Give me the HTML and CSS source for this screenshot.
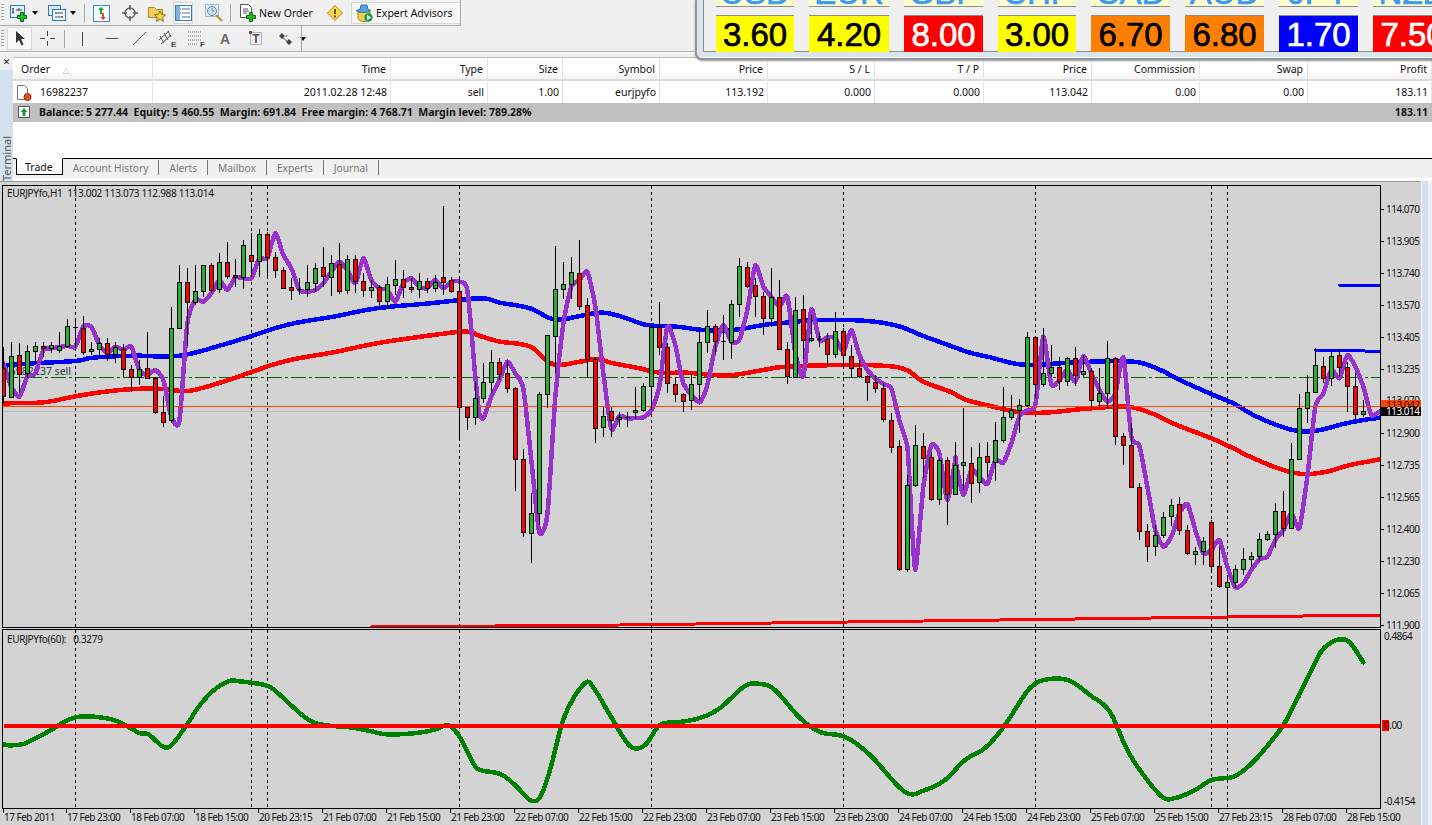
FILE: index.html
```html
<!DOCTYPE html>
<html lang="en">
<head>
<meta charset="utf-8">
<title>MetaTrader - EURJPYfo,H1</title>
<link rel="stylesheet" href="styles.css">
</head>
<body>
<header class="toolbars">
  <div class="bar bar-one">
    <span class="grip"></span>
    <svg class="ml6" width="18" height="17" viewBox="0 0 18 17"><rect x=".5" y=".5" width="14" height="12" fill="#e6f1fb" stroke="#2f78c4"/><path d="M3 3v6M2 4h2M2 7h2M6 5h6M9 3v3" stroke="#444" fill="none"/><path d="M7.500 10.500h3v-3h3v3h3v3h-3v3h-3v-3h-3z" fill="#22c022" stroke="#0b6b0b"/></svg>
    <svg class="ml4 caret" width="6" height="4" viewBox="0 0 6 4"><path d="M0 0h6L3 4z"/></svg>
    <svg class="ml10" width="18" height="16" viewBox="0 0 18 16"><rect x=".5" y=".5" width="12" height="10" fill="#dcebf8" stroke="#2f78c4"/><rect x="4.500" y="4.500" width="13" height="11" fill="#eef5fb" stroke="#2f78c4"/><path d="M7 8h8M7 12h8M8 7v2M14 11v2" stroke="#555" fill="none"/></svg>
    <svg class="ml4 caret" width="6" height="4" viewBox="0 0 6 4"><path d="M0 0h6L3 4z"/></svg>
    <span class="sep ml8"></span>
    <svg class="ml8" width="17" height="17" viewBox="0 0 17 17"><rect x=".5" y=".5" width="16" height="16" fill="#f6fafd" stroke="#3a8ad6"/><path d="M8 2l3 3H9v4H7V5H5z" fill="#1ca31c"/><path d="M10 15l-3-3h2V8h2v4h2z" fill="#e2452a"/></svg>
    <svg class="ml12" width="16" height="16" viewBox="0 0 16 16"><circle cx="8" cy="8" r="5" fill="none" stroke="#666" stroke-width="1.500"/><path d="M8 0v5M8 11v5M0 8h5M11 8h5" stroke="#555" stroke-width="1.500"/></svg>
    <svg class="ml10" width="18" height="17" viewBox="0 0 18 17"><path d="M.5 2.500h6l2 2h6v8H.5z" fill="#f4cf55" stroke="#a88a2a"/><path d="M12 6l1.700 3.400 3.800.5-2.800 2.600.7 3.700-3.400-1.800-3.400 1.800.7-3.700-2.800-2.600 3.800-.5z" fill="#f5d23e" stroke="#8a7420"/></svg>
    <span class="pressed sel-nav ml7"><svg width="17" height="16" viewBox="0 0 17 16"><rect x=".5" y=".5" width="16" height="15" fill="#fff" stroke="#2b7cc9"/><rect x="1" y="1" width="4" height="14" fill="#7fb6e8"/><path d="M7 4h8M7 8h8M7 12h8" stroke="#3a6ea5"/><path d="M5 4h1M5 8h1" stroke="#d33"/></svg></span>
    <svg class="ml12" width="18" height="18" viewBox="0 0 18 18"><rect x=".5" y=".5" width="13" height="12" fill="#e4edf5" stroke="#9fb7cc"/><circle cx="7" cy="7" r="4.500" fill="#cfe2f3" stroke="#5c86ab"/><path d="M7 4v3h2" stroke="#5c86ab" fill="none"/><path d="M11 11l6 6" stroke="#c98b2a" stroke-width="2"/></svg>
    <span class="sep ml7"></span>
    <svg class="ml9" width="17" height="18" viewBox="0 0 17 18"><path d="M.5.500h8l3 3v10H.5z" fill="#fff" stroke="#555"/><path d="M3 5h5M3 7h6M3 9h4" stroke="#555" fill="none"/><path d="M6.500 11.500h3v-3h3v3h3v3h-3v3h-3v-3h-3z" fill="#22c022" stroke="#0b6b0b"/></svg>
    <span class="btn-text new-order">New Order</span>
    <svg class="ml10" width="16" height="16" viewBox="0 0 16 16"><path d="M8 .500L15.500 8 8 15.500.500 8z" fill="#fbd84a" stroke="#b98a1e"/><path d="M8 4v5" stroke="#7a4f00" stroke-width="2"/><path d="M8 10.500v2" stroke="#7a4f00" stroke-width="2"/></svg>
    <span class="pressed ea ml8">
      <svg width="17" height="18" viewBox="0 0 17 18"><path d="M2 8h12v6.500a6 3 0 0 1-12 0z" fill="#f2cf4a" stroke="#a5831f"/><path d="M0 6.500c3 2.500 12 2.500 15 0l-3-1-1-4.500H5L4 5.500z" fill="#5aa6dc" stroke="#2e6fa5"/><circle cx="12.500" cy="13.500" r="4.200" fill="#15a34a"/><path d="M11 11l4 2.500-4 2.500z" fill="#fff"/></svg>
      <span class="btn-text">Expert Advisors</span>
    </span>
    <span class="bar-end bar-end-one"></span>
  </div>
  <div class="bar bar-two">
    <span class="grip"></span>
    <span class="pressed sel-cursor ml3"><svg width="10" height="15" viewBox="0 0 10 15"><path d="M1 0v12l3-3 2.500 5.500 2-1L6 8h4z" fill="#333"/></svg></span>
    <svg class="ml8" width="15" height="15" viewBox="0 0 15 15"><path d="M7.500 0v5M7.500 10v5M0 7.500h5M10 7.500h5" stroke="#444" fill="none"/></svg>
    <span class="sep ml9"></span>
    <svg class="ml16" width="3" height="14" viewBox="0 0 3 14"><path d="M1.500 0v14" stroke="#444"/></svg>
    <svg class="ml22" width="12" height="3" viewBox="0 0 12 3"><path d="M0 1.500h12" stroke="#444"/></svg>
    <svg class="ml15" width="13" height="13" viewBox="0 0 13 13"><path d="M0 13L13 0" stroke="#666"/></svg>
    <svg class="ml13" width="18" height="18" viewBox="0 0 18 18"><path d="M0 10L10 1M2 14L12 5M1 6l4 7M5 3l4 7M9 1l3 6" stroke="#555" fill="none"/><text x="12" y="17" class="tool-mark">E</text></svg>
    <svg class="ml11" width="18" height="18" viewBox="0 0 18 18"><path d="M0 2h14M0 6h14M0 10h14M0 14h10" stroke="#666" stroke-dasharray="1 1" fill="none"/><text x="12" y="17" class="tool-mark">F</text></svg>
    <span class="glyph-a ml14">A</span>
    <svg class="ml17" width="14" height="15" viewBox="0 0 14 15"><rect x="1.500" y="1.500" width="11" height="12" fill="none" stroke="#777" stroke-dasharray="1 1"/><rect x="0" y="0" width="3" height="3" fill="#555"/><text x="7" y="12" class="tool-t">T</text></svg>
    <svg class="ml16" width="14" height="12" viewBox="0 0 14 12"><path d="M0 3l3-3 3 3-3 3zM7 9l3-3 3 3-3 3z" fill="#444"/><path d="M4 5l4 3M8 2l-1 2" stroke="#666"/></svg>
    <svg class="ml7 caret" width="6" height="4" viewBox="0 0 6 4"><path d="M0 0h6L3 4z"/></svg>
    <span class="bar-end bar-end-two"></span>
  </div>
</header>

<aside class="rates">
  <div class="rates-inner">
    <div class="rate-row names">
      <div class="rate name"><span>USD</span></div><div class="rate name"><span>EUR</span></div><div class="rate name"><span>GBP</span></div><div class="rate name"><span>CHF</span></div><div class="rate name"><span>CAD</span></div><div class="rate name"><span>AUD</span></div><div class="rate name"><span>JPY</span></div><div class="rate name"><span>NZD</span></div>
    </div>
    <div class="rate-row values">
      <div class="rate yellow">3.60</div><div class="rate yellow">4.20</div><div class="rate red">8.00</div><div class="rate yellow">3.00</div><div class="rate orange">6.70</div><div class="rate orange">6.80</div><div class="rate blue">1.70</div><div class="rate red">7.50</div>
    </div>
  </div>
</aside>

<section class="terminal">
  <div class="side">
    <span class="close">&#x2715;</span>
    <div class="side-tab"><span class="side-label">Terminal</span></div>
  </div>
  <div class="term-main">
    <div class="cols head">
      <div class="cell left">Order <i class="sort">&#x25B3;</i></div><div class="cell">Time</div><div class="cell">Type</div><div class="cell">Size</div><div class="cell">Symbol</div><div class="cell">Price</div><div class="cell">S / L</div><div class="cell">T / P</div><div class="cell">Price</div><div class="cell">Commission</div><div class="cell">Swap</div><div class="cell">Profit</div>
    </div>
    <div class="cols row">
      <div class="cell left order-cell">
        <svg width="15" height="16" viewBox="0 0 15 16"><path d="M.500.500h7l3 3v11H.500z" fill="#fff" stroke="#777"/><circle cx="10.500" cy="12" r="3.500" fill="#e2501f" stroke="#a32a0a"/></svg>
        <span>16982237</span>
      </div>
      <div class="cell">2011.02.28 12:48</div><div class="cell">sell</div><div class="cell">1.00</div><div class="cell">eurjpyfo</div><div class="cell">113.192</div><div class="cell">0.000</div><div class="cell">0.000</div><div class="cell">113.042</div><div class="cell">0.00</div><div class="cell">0.00</div><div class="cell">183.11</div>
    </div>
    <div class="balance">
      <svg width="12" height="12" viewBox="0 0 12 12"><rect x=".5" y=".5" width="11" height="11" fill="#fff" stroke="#555"/><path d="M6 2l3.500 4H7.500v4h-3V6H2.500z" fill="#159a2b"/></svg>
      <span class="balance-text">Balance: 5 277.44&nbsp; Equity: 5 460.55&nbsp; Margin: 691.84&nbsp; Free margin: 4 768.71&nbsp; Margin level: 789.28%</span>
      <span class="balance-profit">183.11</span>
    </div>
    <div class="blank"></div>
    <nav class="tabs">
      <span class="tab active">Trade</span>
      <span class="tab">Account History</span>
      <span class="tab">Alerts</span>
      <span class="tab">Mailbox</span>
      <span class="tab">Experts</span>
      <span class="tab">Journal</span>
    </nav>
  </div>
</section>

<main class="workspace">
  <svg id="chart" class="chart" width="1421" height="644" viewBox="0 181 1421 644"></svg>
  <div class="dock"></div>
</main>
<script src="chart.js"></script>
</body>
</html>
```
FILE: styles.css
```css
* { box-sizing: border-box; }
html, body { margin: 0; padding: 0; height: 825px; overflow: hidden; background: #f0f0f0; }
body { position: relative; width: 1432px; font: 10.5px "Noto Sans", "DejaVu Sans", sans-serif; color: #111; }
svg { display: block; flex: none; }

.toolbars { height: 57px; background: #f0f0f0; }
.bar { display: flex; align-items: center; position: relative; }
.bar-one { height: 26px; }
.bar-two { height: 26px; border-bottom: 1px solid #a8a8a8; box-shadow: 0 1px 0 #fff; }
.bar-end { position: absolute; left: 0; bottom: 0; border-right: 1px solid #a8a8a8; }
.bar-end-one { width: 461px; height: 26px; border-bottom: 1px solid #a8a8a8; }
.bar-end-two { width: 302px; height: 25px; }
.grip { width: 3px; height: 18px; margin-left: 1px; background: repeating-linear-gradient(#a0a0a0 0 1px, transparent 1px 3px); }
.sep { width: 1px; height: 18px; background: #a8a8a8; flex: none; }
.caret { fill: #111; }
.ml3 { margin-left: 3px; } .ml4 { margin-left: 4px; } .ml6 { margin-left: 6px; } .ml7 { margin-left: 7px; }
.ml8 { margin-left: 8px; } .ml9 { margin-left: 9px; } .ml10 { margin-left: 10px; } .ml11 { margin-left: 11px; }
.ml12 { margin-left: 12px; } .ml13 { margin-left: 13px; } .ml14 { margin-left: 14px; } .ml15 { margin-left: 15px; }
.ml16 { margin-left: 16px; } .ml17 { margin-left: 17px; } .ml22 { margin-left: 22px; }
.pressed { display: flex; align-items: center; justify-content: center; background: #f8f8f8; border: 1px solid #d8d8d8; flex: none; }
.sel-nav { width: 20px; height: 22px; }
.sel-cursor { width: 25px; height: 23px; }
.ea { width: 110px; height: 22px; justify-content: flex-start; padding-left: 4px; gap: 3px; background: #f6f6f6; }
.btn-text { font-size: 10.5px; color: #111; white-space: nowrap; }
.new-order { width: 58px; margin-left: 2px; }
.glyph-a { font: bold 14px "Liberation Sans", sans-serif; color: #666; width: 12px; }
.tool-mark { font: bold 8px "Liberation Sans", sans-serif; fill: #444; }
.tool-t { font: bold 12px "Liberation Sans", sans-serif; fill: #555; text-anchor: middle; }

.rates { position: absolute; top: 0; left: 695px; width: 740px; height: 60px; overflow: hidden; background: #dbe5ee; border: 2px solid #8d979f; border-top: 0; border-right: 0; border-bottom-left-radius: 7px; box-shadow: inset 0 -1px 0 #fff, 0 1px 2px #999; }
.rates-inner { height: 52px; margin-left: 6px; padding-left: 12px; background: #f0f0f0; border-left: 1px solid #8f8f8f; border-bottom: 1px solid #8f8f8f; }
.rate-row { display: grid; grid-template-columns: 93px 95px 94px 93px 94px 94px 94px 94px; }
.rate { margin-right: 15px; text-align: center; font-family: "Liberation Sans", sans-serif; border-top: 1px solid #8c8c8c; -webkit-text-stroke: 0.7px currentColor; }
.names { height: 15px; }
.name { height: 7px; background: #ffffcc; border-top: 0; border-bottom: 1px solid #8c8c8c; font-size: 33px; color: #3a9bf5; overflow: hidden; }
.name span { display: block; line-height: 33px; margin-top: -24px; }
.values .rate { height: 37px; line-height: 37px; font-size: 33px; }
.yellow { background: #ffff00; color: #000; }
.red { background: #ff0000; color: #fff; }
.orange { background: #ff8000; color: #000; }
.blue { background: #0000ff; color: #fff; }

.terminal { display: flex; height: 124px; background: #fff; }
.side { width: 13px; flex: none; background: #f0f0f0; display: flex; flex-direction: column; }
.close { height: 13px; font: bold 9px "DejaVu Sans", sans-serif; line-height: 11px; text-align: center; }
.side-tab { flex: 1; background: #d4e2ef; display: flex; justify-content: center; align-items: flex-end; }
.side-label { writing-mode: vertical-rl; transform: rotate(180deg); color: #555; font-size: 11px; line-height: 12px; }
.term-main { flex: 1; min-width: 0; display: flex; flex-direction: column; }
.cols { display: grid; grid-template-columns: 140px 238px 97px 75px 97px 108px 107px 109px 108px 108px 108px 124px; }
.head { height: 24px; border-top: 1px solid #bdbdbd; border-bottom: 2px solid #dcdcdc; background: linear-gradient(#fff 0 55%, #f4f4f4); }
.cell { padding-right: 4px; text-align: right; line-height: 23px; border-right: 1px solid #e4e4e4; white-space: nowrap; }
.cell.left { text-align: left; padding-left: 8px; }
.sort { font-style: normal; color: #bbb; font-size: 8px; margin-left: 10px; }
.row { height: 22px; }
.row .cell { line-height: 23px; padding-right: 3px; }
.order-cell { display: flex; align-items: center; gap: 8px; padding-left: 4px !important; }
.balance { height: 19px; background: #c0c0c0; display: flex; align-items: center; padding: 0 4px 1px 5px; font-weight: bold; font-size: 10.55px; }
.balance-text { margin-left: 9px; }
.balance-profit { margin-left: auto; }
.blank { height: 36px; }
.tabs { height: 20px; background: #f0f0f0; display: flex; align-items: flex-start; border-top: 1px solid #000; color: #777; padding-left: 3px; font-size: 10.2px; }
.tab { padding: 1px 10px 0; line-height: 14px; height: 15px; margin-top: 1px; border-right: 1px solid #777; }
.tab.active { color: #111; background: #fff; margin-top: -1px; height: 17px; padding: 1px 9px 0 8px; border: 1px solid #000; border-top-color: #fff; font-size: 10.5px; }

.workspace { display: flex; height: 644px; border-top: 0; background: #fff; }
.chart { background: #d3d3d3; box-shadow: inset 0 1px 0 #9a9a9a; }
.dock { width: 11px; margin-left: 1px; background: linear-gradient(90deg, #d4e2ef 0 6px, #f0f0f0 6px); }

.frame { fill: none; stroke: #000; shape-rendering: crispEdges; }
.grid-v { stroke: #000; stroke-dasharray: 3 3; shape-rendering: crispEdges; }
.thick { fill: none; shape-rendering: crispEdges; stroke-linejoin: round; stroke-linecap: round; }
.ma-blue { stroke: #0000ff; stroke-width: 4.5; }
.ma-red { stroke: #ff0000; stroke-width: 4.5; }
.ma-purple { stroke: #9932cc; stroke-width: 4.5; }
.seg-blue { stroke: #0000ff; stroke-width: 3; }
.seg-red { stroke: #ff0000; stroke-width: 3; }
.osc { stroke: #008000; stroke-width: 4.5; }
.zero { stroke: #ff0000; stroke-width: 4; shape-rendering: crispEdges; }
.sell-line { stroke: #006400; stroke-dasharray: 15 3 3 3; shape-rendering: crispEdges; }
.bid-line { stroke: #ff4500; shape-rendering: crispEdges; }
.ask-line { stroke: #bdbdbd; shape-rendering: crispEdges; }
.wick { stroke: #000; shape-rendering: crispEdges; }
.body { stroke: #000; shape-rendering: crispEdges; }
.up { fill: #22b22c; } .down { fill: #ff0000; } .doji { fill: #000; }
.tick { stroke: #000; shape-rendering: crispEdges; }
.t { font: 10px "Noto Sans", sans-serif; fill: #111; letter-spacing: -0.5px; }
.t-head { font: 10px "Noto Sans", sans-serif; fill: #111; letter-spacing: -0.3px; }
.t-sell { font: 10.5px "Noto Sans", sans-serif; fill: #2a3a48; text-anchor: end; }
.tag-orange { fill: #ff4500; } .tag-black { fill: #000; } .tag-red { fill: #ff0000; }
.t-white { fill: #fff; }
```
FILE: chart.js
```javascript
// Candles: [kind, body top, body bottom, wick top, wick bottom], traced at 3x from the chart
var A = [
['r',533,617,470,640],['g',499,620,455,620],['r',496,552,460,610],['g',484,548,465,565],['g',469,484,455,520],['r',469,475,455,500],['g',465,475,455,490],['g',469,479,427,490],['g',409,469,388,475],['d',410,411,388,470],
['r',413,487,378,495],['g',478,484,455,495],['g',460,476,445,495],['r',460,493,445,512],['g',472,493,455,520],['r',478,538,462,560],['r',538,560,525,605],['g',538,560,510,585],['r',535,565,425,565],['r',565,665,560,672],
['r',667,695,618,712],['g',415,691,350,700],['g',277,415,225,415],['r',277,335,235,468],['g',304,335,225,345],['g',226,304,226,320],['r',226,301,220,310],['g',217,298,190,310],['r',217,257,155,268],['r',256,262,208,290],
['g',166,262,150,298],['r',196,214,130,262],['g',133,214,118,262],['r',133,202,125,262],['r',202,241,185,265],['r',241,295,232,295],['r',292,301,265,330],['d',298,299,265,315],['g',277,298,225,322],['g',235,280,218,305],
['r',232,259,170,290],['g',220,262,195,318],['r',223,304,160,312],['g',208,301,195,312],['r',208,274,195,310],['r',274,301,250,320],['g',292,301,270,325],['r',292,334,285,358],['g',283,334,260,358],['g',268,286,210,315],
['r',268,292,240,325],['r',292,298,265,310],['g',274,298,248,325],['r',274,295,265,310],['g',277,295,255,305],['r',262,277,48,315],['r',271,304,262,310],['r',304,650,262,750],['r',650,682,650,720],['g',625,682,572,705]];
var B = [
['g',457,505,400,518],['g',397,457,360,490],['r',397,431,385,450],['r',430,475,392,488],['r',475,688,470,782],['r',688,907,657,920],['g',850,910,790,1000],['g',493,850,485,885],['g',316,493,316,535],['g',178,319,48,430],
['g',163,178,95,208],['g',127,163,80,208],['r',130,229,30,240],['r',226,388,205,445],['r',388,595,380,640],['g',559,592,530,620],['r',544,569,530,622],['g',562,568,545,590],['d',562,563,545,592],['g',541,547,472,568],
['g',469,541,458,545],['g',292,469,285,540],['r',292,352,215,375],['r',352,460,340,490],['r',463,493,440,515],['r',493,514,488,545],['g',463,511,432,540],['g',337,463,292,510],['g',289,337,240,368],['r',289,334,283,372],
['d',332,333,255,390],['g',223,337,210,388],['g',109,223,85,260],['r',112,169,95,175],['r',166,199,145,260],['r',199,265,185,315],['g',202,265,115,290],['r',202,358,150,358],['r',358,439,335,463],['g',241,442,200,442],
['r',238,331,195,388],['g',325,331,255,335],['d',326,327,308,352],['r',328,373,310,405],['g',304,373,245,385],['r',304,376,295,412],['r',379,415,345,445],['r',415,439,390,445],['r',439,457,435,513],['r',457,475,435,490],
['r',475,568,460,575],['r',571,650,550,668],['r',649,1018,630,1022],['g',766,1018,735,1025],['g',646,766,585,772],['r',649,685,610,745],['r',682,808,665,812],['g',691,808,685,825],['r',691,793,682,885],['g',706,793,635,795]];
var C = [
['g',547,556,385,630],['r',550,610,502,668],['g',532,607,490,638],['r',529,547,487,590],['g',481,547,427,603],['g',412,481,320,490],['g',391,412,345,420],['g',376,391,358,458],['g',172,376,157,380],['r',172,313,170,355],
['g',280,313,145,322],['g',262,280,195,290],['r',262,304,230,330],['g',235,304,230,318],['r',235,286,200,318],['g',274,283,225,292],['r',274,361,265,385],['g',340,364,265,380],['g',235,340,182,385],['r',235,469,232,495],
['r',469,496,460,555],['r',496,622,430,625],['r',622,754,610,780],['r',754,799,732,845],['g',766,799,735,828],['g',712,766,695,775],['g',676,709,657,738],['r',673,751,650,765],['r',751,820,735,825],['g',814,823,800,855],
['g',784,814,770,855],['r',727,859,720,872],['r',859,919,800,925],['g',907,922,885,1010],['g',868,907,855,925],['g',838,868,805,885],['g',829,838,815,860],['g',778,829,760,845],['g',763,778,752,782],['g',694,763,670,805],
['r',694,745,632,770],['g',538,745,490,748],['g',385,538,342,540],['g',337,385,285,430],['g',256,337,205,340],['r',259,295,230,310],['g',229,295,215,318],['r',226,262,208,290],['r',262,319,245,395],['r',319,403,280,418],['g',394,403,360,412]];

function z(x0, y0, pts) {
  return pts.map(function (p) { return [x0 + p[0] / 3, y0 + p[1] / 3]; });
}
function pts(list) {
  return list.map(function (p) { return p[0].toFixed(1) + ',' + p[1].toFixed(1); }).join(' ');
}
// Hermite spline through the traced points, so the averages read as curves
function smooth(p, s) {
  var out = [];
  for (var i = 0; i < p.length - 1; i++) {
    var a = p[i - 1] || p[i], b = p[i], c = p[i + 1], d = p[i + 2] || c;
    for (var j = 0; j < 6; j++) {
      var t = j / 6, t2 = t * t, t3 = t2 * t;
      var h1 = 2 * t3 - 3 * t2 + 1, h2 = t3 - 2 * t2 + t, h3 = -2 * t3 + 3 * t2, h4 = t3 - t2;
      out.push([
        h1 * b[0] + h2 * s * (c[0] - a[0]) + h3 * c[0] + h4 * s * (d[0] - b[0]),
        h1 * b[1] + h2 * s * (c[1] - a[1]) + h3 * c[1] + h4 * s * (d[1] - b[1])
      ]);
    }
  }
  out.push(p[p.length - 1]);
  return out;
}

var purple = z(0,190,[[10,520],[34,590],[58,620],[82,560],[106,550],[130,480],[154,475],[202,468],[226,470],[250,410],[274,410],[298,465],[322,490],[346,470],[370,480],[394,470],[418,540],[442,555],[466,540],[490,570],[514,680],[538,695],[562,400],[586,330],[610,335],[634,310],[658,270],[682,300],[706,262],[730,265],[754,265],[778,205],[802,205],[826,130],[850,195],[874,235],[898,300],[922,305],[946,300],[970,280],[994,245],[1018,215],[1042,240],[1066,280],[1090,205],[1114,270],[1138,295],[1162,300],[1186,335],[1210,280],[1234,265],[1258,290],[1282,295],[1306,270],[1330,295],[1354,275],[1378,275],[1402,300],[1426,560],[1438,670]])
  .concat(z(480,230,[[10,565],[34,500],[58,450],[82,395],[106,430],[130,475],[154,690],[178,908],[202,855],[226,500],[250,280],[274,170],[298,150],[322,125],[346,230],[370,430],[394,597],[418,558],[442,565],[490,562],[514,540],[538,470],[562,290],[586,345],[610,460],[658,517],[682,465],[706,350],[730,285],[754,335],[778,330],[802,240],[826,105],[850,170],[874,200],[898,230],[922,200],[946,370],[970,440],[994,238],[1018,330],[1042,322],[1066,325],[1090,365],[1114,300],[1138,375],[1162,420],[1186,445],[1210,462],[1234,475],[1258,570],[1282,650],[1290,780],[1306,1020],[1330,770],[1354,645],[1378,670],[1402,810],[1426,690]]))
  .concat(z(950,280,[[16,540],[40,645],[64,570],[88,590],[112,612],[136,540],[160,548],[184,490],[208,410],[232,390],[256,375],[280,170],[304,315],[328,300],[352,270],[376,305],[400,228],[424,280],[448,330],[472,365],[496,340],[520,232],[544,470],[568,497],[592,620],[616,750],[640,800],[664,770],[688,700],[712,672],[736,750],[760,820],[784,810],[808,780],[832,860],[856,922],[880,910],[904,870],[928,838],[952,830],[976,780],[1000,750],[1024,700],[1048,745],[1072,590],[1096,380],[1120,340],[1144,270],[1168,295],[1192,225],[1216,260],[1240,320],[1264,405],[1288,395]]));

var blue = z(0,190,[[8,527],[100,520],[226,513],[280,503],[400,497],[540,497],[700,455],[860,405],[1000,380],[1130,355],[1290,340]])
  .concat(z(480,230,[[0,205],[60,218],[150,235],[210,265],[250,268],[300,258],[370,248],[440,265],[500,285],[590,290],[670,300],[760,300],[850,285],[930,277],[1010,270],[1150,272],[1250,287],[1330,318]]))
  .concat(z(950,280,[[0,197],[60,218],[120,232],[190,250],[250,255],[330,250],[430,245],[550,245],[620,265],[700,305],[790,345],[850,370],[910,405],[980,435],[1040,452],[1100,452],[1180,432],[1240,420],[1290,413]]));

var red = z(0,190,[[8,640],[130,637],[220,620],[300,607],[400,597],[480,597],[560,603],[620,590],[700,565],[850,515],[1000,487],[1130,460],[1300,435],[1400,425]])
  .concat(z(480,230,[[0,318],[60,335],[120,342],[160,355],[220,403],[300,395],[350,387],[400,400],[470,413],[540,428],[620,428],[700,435],[760,435],[850,420],[920,410],[1090,405],[1220,408],[1280,420],[1330,455]]))
  .concat(z(950,280,[[0,335],[50,360],[130,380],[210,397],[300,397],[400,387],[530,380],[610,402],[680,435],[780,473],[850,505],[900,530],[990,567],[1060,582],[1130,575],[1200,555],[1290,538]]));

var osc = z(0,620,[[8,372],[30,376],[70,372],[100,358],[150,332],[200,302],[250,289],[330,297],[380,318],[420,340],[445,343],[490,380],[515,375],[560,315],[600,255],[640,212],[685,184],[720,184],[800,197],[840,225],[880,262],[930,302],[980,316],[1050,322],[1110,333],[1160,343],[1240,340],[1300,330],[1345,316],[1375,345],[1400,390],[1420,430]])
  .concat([[480,770],[500,774],[515,785],[530,800],[540,797],[550,770],[565,715],[585,683],[595,690],[610,715],[630,746],[645,745],[660,725],[680,722],[700,718],[720,708],[745,686],[760,684],[775,690],[800,718],[820,732],[845,737],[870,755],[905,792],[925,790],[945,780],[965,760],[985,748],[1005,725],[1030,688],[1050,679],[1070,681],[1090,695],[1110,712],[1130,755],[1160,795],[1175,798],[1195,790]])
  .concat(z(1200,620,[[35,480],[100,470],[150,435],[200,380],[250,315],[290,240],[320,180],[360,100],[390,70],[420,58],[450,68],[490,127]]));

var dashes = [75, 251, 267, 459, 651, 843, 1035, 1211, 1227];
var prices = ['114.070','113.905','113.740','113.570','113.405','113.235','','112.900','112.735','112.565','112.400','112.230','112.065','111.900'];
var dates = ['17 Feb 2011','17 Feb 23:00','18 Feb 07:00','18 Feb 15:00','20 Feb 23:15','21 Feb 07:00','21 Feb 15:00','21 Feb 23:00','22 Feb 07:00','22 Feb 15:00','22 Feb 23:00','23 Feb 07:00','23 Feb 15:00','23 Feb 23:00','24 Feb 07:00','24 Feb 15:00','24 Feb 23:00','25 Feb 07:00','25 Feb 15:00','27 Feb 23:15','28 Feb 07:00','28 Feb 15:00'];

var o = [];
o.push('<defs><clipPath id="mainClip"><rect x="3" y="186" width="1377" height="441"/></clipPath><clipPath id="subClip"><rect x="3" y="630" width="1377" height="178"/></clipPath></defs>');

// frames
o.push('<rect class="frame" x="2.5" y="185.5" width="1378" height="442"/>');
o.push('<rect class="frame" x="2.5" y="629.5" width="1378" height="179"/>');

// session separators
dashes.forEach(function (x) {
  o.push('<path class="grid-v" d="M' + (x + .5) + ' 186V627M' + (x + .5) + ' 630V808"/>');
});

o.push('<g clip-path="url(#mainClip)">');
o.push('<path class="sell-line" d="M3 377.500H1380"/>');
o.push('<text class="t-sell" x="71" y="375">16982237 sell</text>');
o.push('<path class="ask-line" d="M3 411.500H1380"/>');
o.push('<polyline class="thick seg-red" points="371,627 620,625 1000,620 1380,615"/>');
o.push('<polyline class="thick ma-red" points="' + pts(smooth(red, .5)) + '"/>');
o.push('<polyline class="thick ma-blue" points="' + pts(smooth(blue, .5)) + '"/>');
o.push('<polyline class="thick seg-blue" points="1339,285 1380,285"/>');
o.push('<polyline class="thick seg-blue" points="1315,350 1365,351 1380,352"/>');
o.push('<polyline class="thick ma-purple" points="' + pts(smooth(purple, .3)) + '"/>');
o.push('<path class="bid-line" d="M3 406.500H1380"/>');

function candles(rows, y0, k0) {
  rows.forEach(function (c, i) {
    var x = 3 + 8 * (k0 + i);
    var top = Math.round(y0 + c[1] / 3), bot = Math.round(y0 + c[2] / 3);
    var wt = Math.round(y0 + c[3] / 3), wb = Math.round(y0 + c[4] / 3);
    var cls = c[0] === 'g' ? 'up' : c[0] === 'r' ? 'down' : 'doji';
    o.push('<path class="wick" d="M' + (x + .5) + ' ' + wt + 'V' + wb + '"/>');
    if (c[0] === 'd') {
      o.push('<path class="wick" d="M' + (x - 2) + ' ' + (top + .5) + 'H' + (x + 3) + '"/>');
    } else {
      o.push('<rect class="body ' + cls + '" x="' + (x - 1.5) + '" y="' + (top + .5) + '" width="4" height="' + Math.max(bot - top, 1) + '"/>');
    }
  });
}
candles(A, 190, 0);
candles(B, 230, 60);
candles(C, 280, 120);
o.push('</g>');

// oscillator
o.push('<g clip-path="url(#subClip)">');
o.push('<polyline class="thick osc" points="' + pts(smooth(osc, .5)) + '"/>');
o.push('<path class="zero" d="M4 726H1380"/>');
o.push('</g>');

// price axis
prices.forEach(function (p, i) {
  var y = 209 + 32 * i;
  o.push('<path class="tick" d="M1381 ' + (y + .5) + 'H1384"/>');
  if (p) o.push('<text class="t" x="1386" y="' + (y + 4) + '">' + p + '</text>');
});
o.push('<text class="t" x="1386" y="404">113.070</text>');
o.push('<rect class="tag-orange" x="1381" y="400" width="41" height="7"/>');
o.push('<text class="t" x="1386" y="409">113.042</text>');
o.push('<rect class="tag-black" x="1381" y="407" width="41" height="9"/>');
o.push('<text class="t t-white" x="1386" y="415">113.014</text>');

o.push('<text class="t" x="1384" y="640">0.4864</text>');
o.push('<text class="t" x="1384" y="805">-0.4154</text>');
o.push('<rect class="tag-red" x="1382" y="720" width="7" height="11"/>');
o.push('<text class="t" x="1384" y="729">0.00</text>');

// time axis
dates.forEach(function (d, i) {
  var x = i === 0 ? 3 : 2 + 64 * i;
  o.push('<path class="tick" d="M' + (x + .5) + ' 809V813"/>');
  o.push('<text class="t" x="' + (x + 1) + '" y="821">' + d + '</text>');
});

// labels
o.push('<text class="t-head" x="7" y="197">EURJPYfo,H1&#160; 113.002 113.073 112.988 113.014</text>');
o.push('<text class="t-head" x="7" y="643">EURJPYfo(60):&#160;&#160; 0.3279</text>');

document.getElementById('chart').innerHTML = o.join('');
```
